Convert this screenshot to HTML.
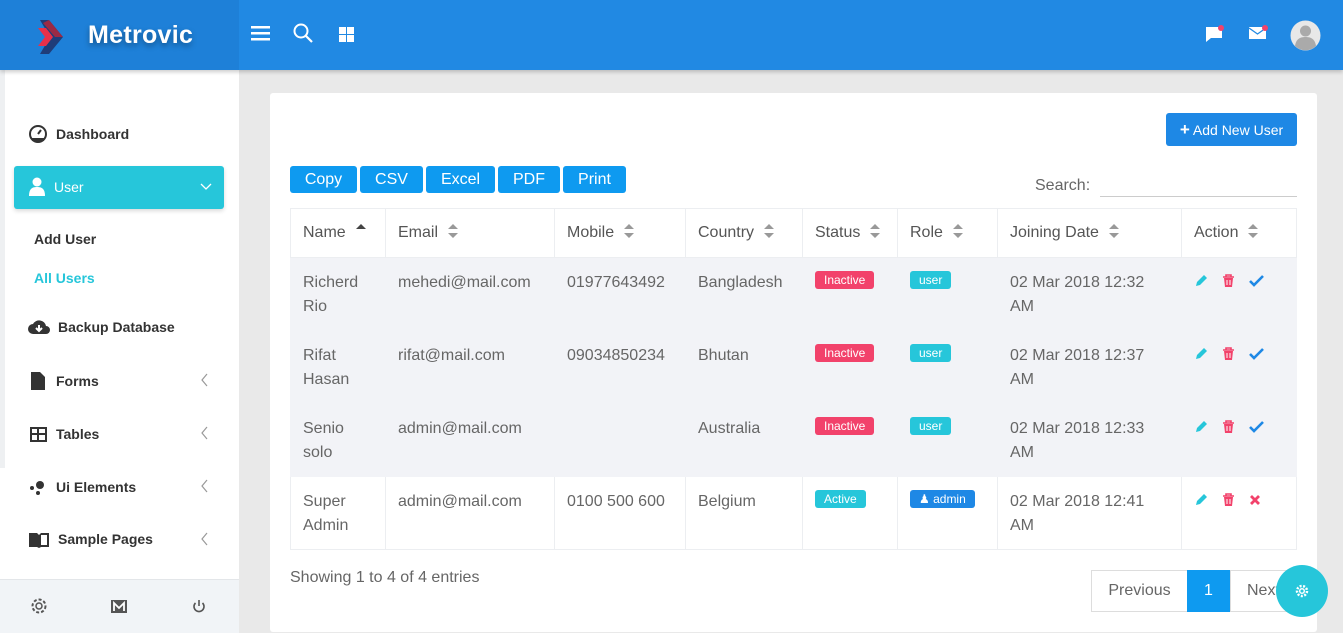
<!DOCTYPE html>
<html><head><meta charset="utf-8"><style>
*{box-sizing:border-box;margin:0;padding:0}
html,body{width:1343px;height:633px;overflow:hidden}
body{background:#e9e9e9;font-family:"Liberation Sans",Arial,sans-serif;position:relative}
.hdr{position:absolute;left:0;top:0;width:1343px;height:70px;background:#2189e3;box-shadow:0 2px 4px rgba(0,0,0,.2);z-index:3}
.logo{position:absolute;left:0;top:0;width:239px;height:70px;background:#1e80d8}
.logo .t{position:absolute;left:88px;top:21px;color:#fff;font-weight:bold;font-size:25px;letter-spacing:.3px;text-shadow:0 3px 6px rgba(0,0,0,.35)}
.side{position:absolute;left:0;top:70px;width:239px;height:563px;background:#fff}
.strip{position:absolute;left:0;top:70px;width:5px;height:398px;background:#eef0f2}
.mi{position:absolute;left:28px;font-size:14px;font-weight:bold;color:#333;display:flex;align-items:center}
.mi svg{margin-right:8px}
.chev{position:absolute;left:201px}
.sbot{position:absolute;left:0;top:579px;width:239px;height:54px;background:#f1f4f7;border-top:1px solid #e3e6e9}
.card{position:absolute;left:270px;top:93px;width:1047px;height:539px;background:#fff;border-radius:3px}
.btn{position:absolute;top:166px;height:27px;background:#0e9af0;color:#fff;font-size:16px;border-radius:3px;text-align:center;line-height:27px}
table{position:absolute;left:290px;top:208px;width:1007px;border-collapse:collapse;font-size:16px;color:#666}
td,th{border:1px solid #eceef1;vertical-align:top;text-align:left;font-weight:normal;padding:0 12px}
th{height:49px;vertical-align:middle;color:#555}
td{height:73px;padding-top:13px;line-height:24px}
tr.g td{background:#f2f3f7;border-color:#f2f3f7}
.srt{display:inline-block;margin-left:10px;vertical-align:-1px}
.b{display:inline-block;color:#fff;font-size:12px;line-height:18px;padding:0 9px;border-radius:3px;vertical-align:3px}
.red{background:#f2426b}.cy{background:#26c6da}.bl{background:#1e88e5}
.act{display:flex;gap:14px;align-items:center;padding-top:3px}
</style></head><body>
<div class="hdr">
 <div class="logo">
  <svg style="position:absolute;left:38px;top:20px" width="28" height="34" viewBox="0 0 28 34"><path d="M2 0h9l14 17-14 17H2l10-17z" fill="#1f3d7a"/><path d="M0 8l8 0 7 9-7 9H0l7-9z" fill="#e8304a"/><path d="M11 0l14 17h-8L5 3z" fill="#9b2a45"/></svg>
  <div class="t">Metrovic</div>
 </div>
 <svg style="position:absolute;left:251px;top:26px" width="19" height="15"><rect y="0" width="19" height="2.5" fill="#fff"/><rect y="6" width="19" height="2.5" fill="#fff"/><rect y="12" width="19" height="2.5" fill="#fff"/></svg>
 <svg style="position:absolute;left:293px;top:23px" width="21" height="21"><circle cx="8" cy="8" r="6.5" stroke="#fff" stroke-width="2" fill="none"/><path d="M13 13l6 6" stroke="#fff" stroke-width="2.2"/></svg>
 <svg style="position:absolute;left:339px;top:27px" width="15" height="15"><rect width="7" height="7" fill="#fff"/><rect x="8" width="7" height="7" fill="#fff"/><rect y="8" width="7" height="7" fill="#fff"/><rect x="8" y="8" width="7" height="7" fill="#fff"/></svg>
 <svg style="position:absolute;left:1205px;top:24px" width="20" height="20"><path d="M1 3h16v11H6l-5 4z" fill="#fff"/><circle cx="16" cy="4" r="3" fill="#f2426b"/></svg>
 <svg style="position:absolute;left:1248px;top:24px" width="22" height="18"><rect x="1" y="3" width="17" height="12" fill="#fff"/><path d="M1 4l8.5 6 8.5-6" stroke="#2189e3" stroke-width="1.3" fill="none"/><circle cx="17" cy="4" r="3" fill="#f2426b"/></svg>
 <svg style="position:absolute;left:1290px;top:20px" width="31" height="31"><circle cx="15.5" cy="15.5" r="15" fill="#e8e8e8"/><circle cx="15.5" cy="11" r="5.5" fill="#aaa"/><path d="M5 26c1-7 5-9 10.5-9s9.5 2 10.5 9a15 15 0 0 1-21 0z" fill="#aaa"/></svg>
</div>
<div class="side"></div><div class="strip"></div>
<div class="mi" style="top:124px"><svg width="20" height="20"><circle cx="10" cy="10" r="8" fill="none" stroke="#333" stroke-width="2"/><path d="M10 10l3-4" stroke="#333" stroke-width="2"/><path d="M4 14h12v3H4z" fill="#333"/></svg>Dashboard</div>
<div style="position:absolute;left:14px;top:166px;width:210px;height:43px;background:#26c6da;border-radius:3px;box-shadow:0 2px 4px rgba(0,0,0,.15)"></div>
<div class="mi" style="top:177px;color:#fff;font-weight:normal"><svg width="18" height="20"><circle cx="9" cy="5" r="4.5" fill="#fff"/><path d="M1 19c0-7 3-9 8-9s8 2 8 9z" fill="#fff"/></svg>User</div>
<svg style="position:absolute;left:200px;top:183px" width="12" height="8"><path d="M1 1l5 5 5-5" stroke="#fff" fill="none" stroke-width="1.3"/></svg>
<div style="position:absolute;left:34px;top:231px;font-size:14px;font-weight:bold;color:#333">Add User</div>
<div style="position:absolute;left:34px;top:270px;font-size:14px;font-weight:bold;color:#26c6da">All Users</div>
<div class="mi" style="top:318px"><svg width="22" height="18"><path d="M5 16a5 5 0 0 1 0-10 7 7 0 0 1 13 2 4 4 0 0 1 0 8z" fill="#333"/><path d="M11 7v6M8 10l3 3 3-3" stroke="#fff" stroke-width="2" fill="none"/></svg>Backup Database</div>
<div class="mi" style="top:371px"><svg width="20" height="20"><path d="M3 1h9l5 5v13H3z" fill="#333"/></svg>Forms</div>
<div class="mi" style="top:424px"><svg width="20" height="20"><rect x="3" y="4" width="15" height="13" fill="none" stroke="#333" stroke-width="2"/><path d="M3 10h15M10 4v13" stroke="#333" stroke-width="2"/></svg>Tables</div>
<div class="mi" style="top:477px"><svg width="20" height="20"><circle cx="4" cy="11" r="2" fill="#333"/><circle cx="12" cy="8" r="4" fill="#333"/><circle cx="10" cy="16" r="2" fill="#333"/></svg>Ui Elements</div>
<div class="mi" style="top:530px"><svg width="22" height="18"><path d="M1 3h8l2 2 2-2h8v14h-8l-2 1-2-1H1z" fill="#333"/><path d="M13 5h6v10h-6z" fill="#fff"/></svg>Sample Pages</div>
<svg class="chev" style="top:373px" width="8" height="14"><path d="M6 1L1 7l5 6" stroke="#999" fill="none" stroke-width="1.2"/></svg>
<svg class="chev" style="top:426px" width="8" height="14"><path d="M6 1L1 7l5 6" stroke="#999" fill="none" stroke-width="1.2"/></svg>
<svg class="chev" style="top:479px" width="8" height="14"><path d="M6 1L1 7l5 6" stroke="#999" fill="none" stroke-width="1.2"/></svg>
<svg class="chev" style="top:532px" width="8" height="14"><path d="M6 1L1 7l5 6" stroke="#999" fill="none" stroke-width="1.2"/></svg>
<div class="sbot"></div>
<svg style="position:absolute;left:30px;top:597px" width="18" height="18"><circle cx="9" cy="9" r="3" fill="none" stroke="#555" stroke-width="1.5"/><circle cx="9" cy="9" r="6.5" fill="none" stroke="#555" stroke-width="2" stroke-dasharray="3 2"/></svg>
<svg style="position:absolute;left:111px;top:600px" width="16" height="13"><rect width="16" height="13" fill="#555"/><path d="M3 11V3l5 5 5-5v8" stroke="#fff" stroke-width="1.8" fill="none"/></svg>
<svg style="position:absolute;left:191px;top:598px" width="16" height="16"><path d="M4.5 5a5 5 0 1 0 7 0" stroke="#555" stroke-width="1.6" fill="none"/><path d="M8 2v6" stroke="#555" stroke-width="1.6"/></svg>
<div class="card"></div>
<div style="position:absolute;left:1166px;top:113px;width:131px;height:33px;background:#1e88e5;border-radius:3px;color:#fff;font-size:14px;line-height:33px;text-align:center"><b style="font-size:17px">+</b> Add New User</div>
<div class="btn" style="left:290px;width:67px">Copy</div>
<div class="btn" style="left:360px;width:63px">CSV</div>
<div class="btn" style="left:426px;width:69px">Excel</div>
<div class="btn" style="left:498px;width:62px">PDF</div>
<div class="btn" style="left:563px;width:63px">Print</div>
<div style="position:absolute;left:1035px;top:177px;font-size:16px;color:#666">Search:</div>
<div style="position:absolute;left:1100px;top:196px;width:197px;height:1px;background:#ccc"></div>
<table>
<tr><th style="width:95px">Name<svg class="srt" width="10" height="14"><path d="M0 5l5-5 5 5z" fill="#444"/></svg></th><th style="width:169px">Email<i class="s"></i></th><th style="width:131px">Mobile<i class="s"></i></th><th style="width:117px">Country<i class="s"></i></th><th style="width:95px">Status<i class="s"></i></th><th style="width:100px">Role<i class="s"></i></th><th style="width:184px">Joining Date<i class="s"></i></th><th>Action<i class="s"></i></th></tr>
<tr class="g"><td>Richerd Rio</td><td>mehedi@mail.com</td><td>01977643492</td><td>Bangladesh</td><td><span class="b red">Inactive</span></td><td><span class="b cy">user</span></td><td>02 Mar 2018 12:32 AM</td><td><div class="act">ACT</div></td></tr>
<tr class="g"><td>Rifat Hasan</td><td>rifat@mail.com</td><td>09034850234</td><td>Bhutan</td><td><span class="b red">Inactive</span></td><td><span class="b cy">user</span></td><td>02 Mar 2018 12:37 AM</td><td><div class="act">ACT</div></td></tr>
<tr class="g"><td>Senio solo</td><td>admin@mail.com</td><td></td><td>Australia</td><td><span class="b red">Inactive</span></td><td><span class="b cy">user</span></td><td>02 Mar 2018 12:33 AM</td><td><div class="act">ACT</div></td></tr>
<tr><td>Super Admin</td><td>admin@mail.com</td><td>0100 500 600</td><td>Belgium</td><td><span class="b cy">Active</span></td><td><span class="b bl">&#9823; admin</span></td><td>02 Mar 2018 12:41 AM</td><td><div class="act">ACTX</div></td></tr>
</table>
<div style="position:absolute;left:290px;top:569px;font-size:16px;color:#666">Showing 1 to 4 of 4 entries</div>
<div style="position:absolute;left:1091px;top:570px;width:97px;height:42px;border:1px solid #ddd;font-size:16px;color:#666;line-height:40px;text-align:center">Previous</div>
<div style="position:absolute;left:1187px;top:570px;width:43px;height:42px;background:#0e9af0;color:#fff;font-size:16px;line-height:42px;text-align:center">1</div>
<div style="position:absolute;left:1230px;top:570px;width:70px;height:42px;border:1px solid #ddd;font-size:16px;color:#666;line-height:40px;padding-left:16px">Next</div>
<div style="position:absolute;left:1276px;top:565px;width:52px;height:52px;border-radius:50%;background:#26c6da"></div>
<svg style="position:absolute;left:1295px;top:584px" width="14" height="14"><circle cx="7" cy="7" r="2.3" fill="none" stroke="#fff" stroke-width="1.5"/><circle cx="7" cy="7" r="5" fill="none" stroke="#fff" stroke-width="2.5" stroke-dasharray="2 1.5"/></svg>
<script>
var pen='<svg width="14" height="14"><path d="M2 12l1-4 7-7 3 3-7 7z" fill="#26c6da"/></svg>';
var bin='<svg width="13" height="14"><path d="M1 3h11M4 3V1h5v2" stroke="#f2426b" stroke-width="1.6" fill="none"/><path d="M2 4h9l-1 9H3z" fill="#f2426b"/><path d="M5 6v5M8 6v5" stroke="#fff"/></svg>';
var ok='<svg width="15" height="12"><path d="M1 6l4 4 9-9" stroke="#1e88e5" stroke-width="2.6" fill="none"/></svg>';
var x='<svg width="12" height="12"><path d="M2 2l8 8M10 2l-8 8" stroke="#f2426b" stroke-width="2.8"/></svg>';
document.querySelectorAll('.act').forEach(function(e){var t=e.textContent;e.innerHTML=pen+bin+(t=='ACTX'?x:ok);});
document.querySelectorAll('i.s').forEach(function(e){e.outerHTML='<svg class="srt" width="10" height="14"><path d="M0 5l5-5 5 5zM0 9l5 5 5-5z" fill="#999"/></svg>';});
</script>
</body></html>
